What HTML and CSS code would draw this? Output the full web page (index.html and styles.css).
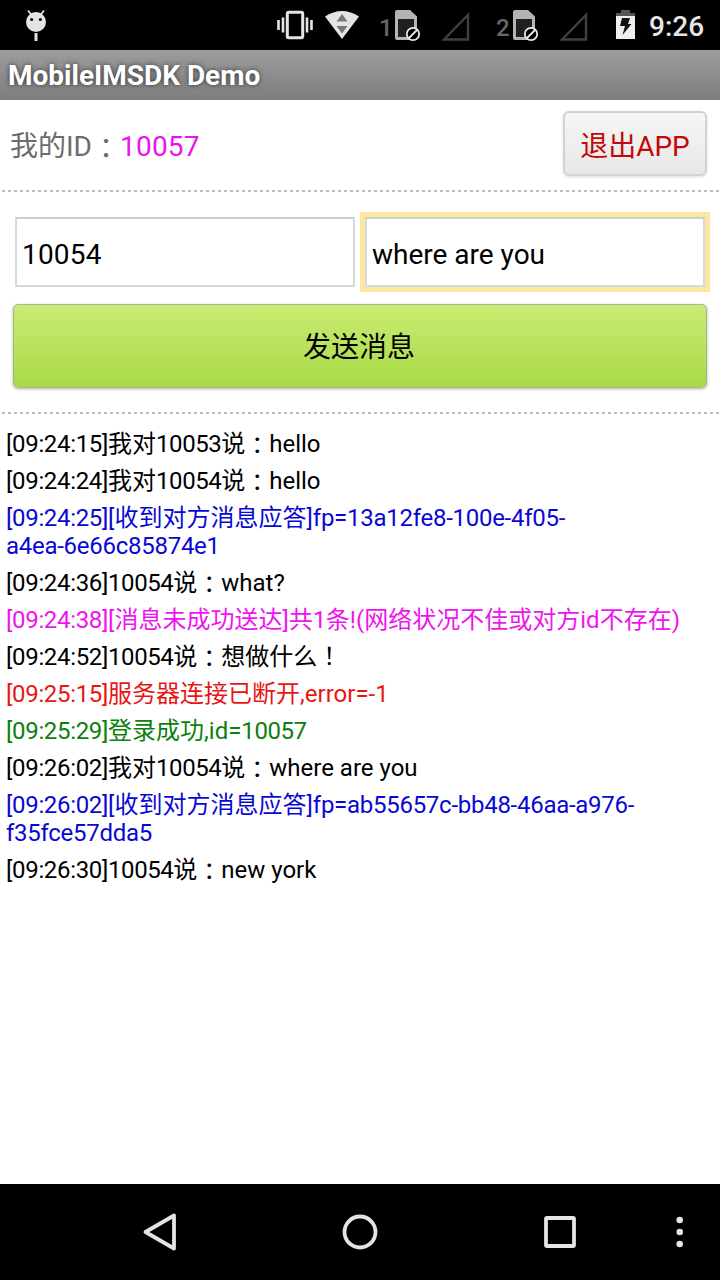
FILE: index.html
```html
<!DOCTYPE html>
<html lang="zh-CN">
<head>
<meta charset="utf-8">
<title>MobileIMSDK Demo</title>
<link rel="stylesheet" href="styles.css">
</head>
<body>
<div class="screen">
  <header class="status">
    <svg class="status-icons" width="640" height="50" viewBox="0 0 640 50">
      <g fill="#e4e4e4">
        <circle cx="36" cy="22" r="10"/>
        <path d="M28 10.500l4 5M44 10.500l-4 5" stroke="#e4e4e4" stroke-width="1.800"/>
        <rect x="34.500" y="33" width="3" height="8"/>
      </g>
      <circle cx="31.600" cy="19.600" r="1.500"/><circle cx="40.400" cy="19.600" r="1.500"/>
      <rect x="287.300" y="12.300" width="15.400" height="25.400" rx="1.500" fill="none" stroke="#e4e4e4" stroke-width="3"/>
      <path d="M278.500 20v10M283 17.500v15M307 17.500v15M311.500 20v10" stroke="#e4e4e4" stroke-width="2.600"/>
      <path d="M325 16.500Q342 5.500 359 16.500L342 39z" fill="#e4e4e4"/>
      <path d="M336.500 21.500l5.500-7.500 5.500 7.500zM336.500 26h11l-5.500 7.500z" fill="#777"/>
      <g id="sim">
        <path d="M397 10h13l7 6.500V40h-20q-2 0-2-2V12q0-2 2-2z" fill="#b3b4b5"/>
        <rect x="398" y="19" width="16" height="18" fill="#202020"/>
        <circle cx="413" cy="34" r="6.200" fill="#000" stroke="#e8e8e8" stroke-width="1.800"/>
        <path d="M409 38l8-8" stroke="#e8e8e8" stroke-width="1.800"/>
        <path d="M444 39.500L468 15v24.500z" fill="none" stroke="#404040" stroke-width="2.400"/>
      </g>
      <use href="#sim" x="118"/>
      <path d="M621 10h9v3h5v3h-19v-3h5z" fill="#555"/>
      <rect x="616" y="16" width="19" height="23" fill="#eee"/>
      <path d="M622 18h8l-2 6h3.500l-9 11 2.500-9h-5z" fill="#111"/>
      <text class="sim-number" x="379" y="36">1</text>
      <text class="sim-number" x="496" y="36">2</text>
    </svg>
    <span class="clock">9:26</span>
  </header>
  <div class="titlebar">MobileIMSDK Demo</div>
  <section class="account">
    <div class="identity">我的ID<i lang="zh-TW">：</i><span class="user-id">10057</span></div>
    <button class="exit">退出APP</button>
  </section>
  <div class="divider"></div>
  <section class="composer">
    <div class="fields">
      <div class="field"><div class="field-box number">10054</div></div>
      <div class="field focused"><div class="field-box">where are you</div></div>
    </div>
    <button class="send">发送消息</button>
  </section>
  <div class="divider"></div>
  <main class="log">
    <p><time>[09:24:15]</time>我对<b>10053</b>说<i lang="zh-TW">：</i>hello</p>
    <p><time>[09:24:24]</time>我对<b>10054</b>说<i lang="zh-TW">：</i>hello</p>
    <p class="ack"><time>[09:24:25]</time>[收到对方消息应答]<span class="hex">fp=13a12fe8-100e-4f05-<br>a4ea-6e66c85874e1</span></p>
    <p><time>[09:24:36]</time><b>10054</b>说<i lang="zh-TW">：</i>what?</p>
    <p class="lost"><time>[09:24:38]</time>[消息未成功送达]共<b>1</b>条!(网络状况不佳或对方id不存在)</p>
    <p><time>[09:24:52]</time><b>10054</b>说<i lang="zh-TW">：</i>想做什么<i class="exclaim" lang="zh-TW">！</i></p>
    <p class="error"><time>[09:25:15]</time>服务器连接已断开,error=-1</p>
    <p class="success"><time>[09:25:29]</time>登录成功,id=<b>10057</b></p>
    <p><time>[09:26:02]</time>我对<b>10054</b>说<i lang="zh-TW">：</i>where are you</p>
    <p class="ack"><time>[09:26:02]</time>[收到对方消息应答]<span class="hex">fp=ab55657c-bb48-46aa-a976-<br>f35fce57dda5</span></p>
    <p><time>[09:26:30]</time><b>10054</b>说<i lang="zh-TW">：</i>new york</p>
  </main>
  <nav class="navbar">
    <svg width="720" height="96" viewBox="0 0 720 96" fill="none" stroke="#e4e4e4" stroke-width="3.800" stroke-linejoin="round">
      <path d="M145.500 48L174 31.500v33z"/>
      <circle cx="360" cy="48" r="15.500"/>
      <rect x="546" y="34" width="28" height="28" rx="1"/>
      <g fill="#e4e4e4" stroke="none"><circle cx="679.700" cy="36" r="3.300"/><circle cx="679.700" cy="48" r="3.300"/><circle cx="679.700" cy="60" r="3.300"/></g>
    </svg>
  </nav>
</div>
</body>
</html>
```

FILE: styles.css
```css
* { box-sizing: border-box; }
body {
  margin: 0;
  background: #fff;
  font-family: Roboto, "Noto Sans CJK SC", sans-serif;
  font-size: 28px;
  color: #000;
}
i { font-family: "Noto Sans CJK TC", sans-serif; font-style: normal; line-height: 0; vertical-align: -3px; }
.screen { width: 720px; height: 1280px; display: flex; flex-direction: column; }
.status { height: 50px; flex: none; background: #000; display: flex; }
.status-icons { flex: none; }
.sim-number { font-size: 24px; font-weight: 500; fill: #686868; }
.clock { padding-left: 9px; font-size: 28px; line-height: 54px; color: #e6e6e6; font-weight: 500; }
.titlebar {
  height: 50px;
  flex: none;
  padding-left: 8px;
  line-height: 52px;
  font-size: 28px;
  font-weight: 700;
  color: #fff;
  background: linear-gradient(#9c9c9c, #7e7e7e);
  text-shadow: 0 0 5px #333;
}
.account { height: 90px; flex: none; display: flex; justify-content: space-between; padding: 11px 13px 0 10px; }
.identity { line-height: 72px; color: #6c6c6c; white-space: nowrap; }
.user-id { color: #e815e8; letter-spacing: 0.2px; }
.exit {
  width: 144px;
  height: 65px;
  padding: 1px 0 0;
  border: 2px solid #d2d2d2;
  border-radius: 6px;
  background: linear-gradient(#f6f6f6, #e7e7e7);
  box-shadow: 0 1px 3px #ddd;
  font: inherit;
  color: #c40808;
}
.divider {
  height: 2px;
  flex: none;
  background: repeating-linear-gradient(90deg, #bdbdbd 0 3px, #fff 3px 6px) 2px 0;
}
.composer { height: 220px; flex: none; padding: 20px 10px 0; }
.fields { display: flex; }
.field { width: 350px; height: 80px; padding: 5px; }
.focused { background: #fde7a0; }
.field-box {
  height: 70px;
  padding-left: 5px;
  line-height: 72px;
  background: #fff;
  border: 2px solid #d4dae0;
  border-top-color: #c8cfd3;
}
.number { letter-spacing: 0.2px; }
.send {
  display: block;
  width: 694px;
  height: 84px;
  margin: 12px 0 0 3px;
  padding: 0 0 2px;
  border: 1px solid #a9b68f;
  border-radius: 5px;
  background: linear-gradient(#c9eb72, #aada47);
  box-shadow: 0 1px 3px #aaa;
  font: inherit;
  color: #000;
  text-indent: -2px;
}
.log { flex: 1; padding: 16px 6px 0; font-size: 24px; line-height: 28px; }
.log p { margin: 0 0 9px; white-space: nowrap; }
.log i { vertical-align: -2px; }
.log .exclaim { vertical-align: 0; }
.log b { font-weight: 400; letter-spacing: -0.46px; }
.log time { letter-spacing: -0.32px; }
.hex { letter-spacing: -0.27px; }
.ack { color: #0808d4; }
.lost { color: #ee14ee; }
.error { color: #e81515; }
.success { color: #0b800b; }
.navbar { height: 96px; flex: none; background: #000; }
```
